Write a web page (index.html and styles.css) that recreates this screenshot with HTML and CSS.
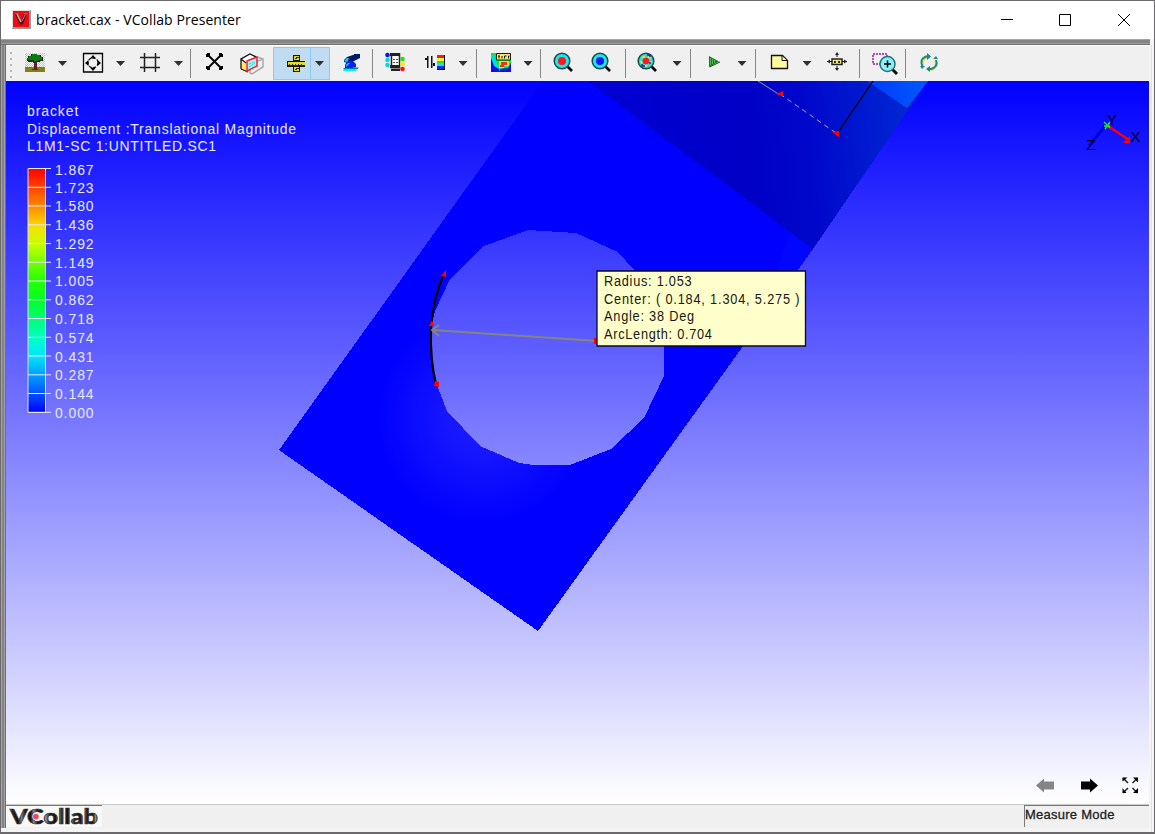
FILE: index.html
```html
<!DOCTYPE html>
<html lang="en">
<head>
<meta charset="utf-8">
<title>bracket.cax - VCollab Presenter</title>
<link rel="stylesheet" href="styles.css">
</head>
<body>
<div class="window">
  <header class="titlebar">
    <svg class="app-icon" width="19" height="19" viewBox="0 0 19 19"><path fill="#999" d="M0 0h19v19H0z"/><path fill="#ddd" d="M0 0h18v1H1v17H0z"/><path fill="#f00b12" d="M1 1h16v16H1z"/><path d="M4.500 4l4 9h1.500l3.500-10" fill="none" stroke="#601015" stroke-width="2.800"/><path d="M5 4l4 8" stroke="#bbb" stroke-width="1.500"/><path d="M10 11l4-8" stroke="#a88" /><path d="M3 3.500h4M11.500 3.500h4" stroke="#777"/></svg>
    <h1 class="title">bracket.cax - VCollab Presenter</h1>
    <svg class="caption" width="132" height="20" viewBox="1000 10 132 20" fill="none" stroke="#000" stroke-width="1"><path d="M1001 19.5h12M1059.500 14.500h11v11h-11zM1118 14l12 12M1130 14l-12 12"/></svg>
  </header>
  <div class="frame">
    <nav class="toolbar">
      <span class="grip"></span>
      <svg class="icon" viewBox="0 0 20 20"><defs><pattern id="sky" width="2" height="2" patternUnits="userSpaceOnUse"><path fill="#fff" d="M0 0h2v2H0z"/><path fill="#43f2f7" d="M0 0h1v1H0zM1 1h1v1H1z"/></pattern></defs><path fill="url(#sky)" d="M0-1h20v16H0z"/><path fill="#808018" d="M0 13h20v5H0z"/><path fill="#0a340b" d="M6 0h6v1h4v2h2v4h-3v1h-4v1H8V8H3V7H2V4h1V2h3z"/><path fill="#087d15" d="M7 0h5v1h3v2h2v3h-4v1H9V6H3V4h1V2h3z"/><path fill="#651b22" d="M9 7h3v8h1v1H7v-1h2z"/></svg>
      <span class="caret"></span>
      <svg class="icon" viewBox="0 0 20 20"><path d="M.5-.500h19v18.500H.5z" fill="none" stroke="#000" stroke-width="1.300"/><circle cx="10" cy="8.800" r="5" fill="none" stroke="#222" stroke-width="1.300" stroke-dasharray="3 1.500"/><path d="M10 1l3 3.500H7zM10 17l3-3.500H7zM2 9l3.500-3v6zM18 9l-3.500-3v6z"/></svg>
      <span class="caret"></span>
      <svg class="icon" viewBox="0 0 20 20"><path d="M4.500-1v19M15.500-1v19M0 3.500h20M0 13.500h20" stroke="#222" stroke-width="1.500"/></svg>
      <span class="caret"></span>
      <span class="sep"></span>
      <svg class="icon" viewBox="0 0 20 20"><path d="M3 1l13 13M16 1L3 14" stroke="#000" stroke-width="1.800"/><path d="M2-1h3v3H4v1H1V0h1zM14-1h3v1h1v3h-3V2h-1zM1 12h3v1h1v3H2v-1H1zM15 12h3v3h-1v1h-3v-3h1z"/></svg>
      <svg class="icon wide" viewBox="0 0 24 22"><path d="M1 6l9-5 5 3-9 4-1 11-4-2z" fill="#fff"/><path d="M1 8l5 3v8l-5-3z" fill="#ffe867"/><path d="M10 19V11l13-5v8l-11 7-2-1zM14 3l9 3" fill="none" stroke="#aaa" stroke-width="1.500"/><path d="M1 16V6l9-5 6 3M1 6l5 4M1 16l7 3" fill="none" stroke="#111" stroke-width="1.300"/><path d="M7 8l10-4v9L7 18z" fill="#9df4fa" stroke="#f32228" stroke-width="1.500"/><path d="M9 11l6-2M9 14l6-4" stroke="#39cbd0" stroke-dasharray="2 1"/></svg>
      <span class="active-tool">
        <svg class="icon" viewBox="0 0 20 20"><path fill="#171707" d="M7 1h7v17H7zM1 7h18v6H1z"/><path fill="#e6dd1d" d="M8 2h5v4H8zM2 8h17v3H2zM8 13h5v4H8z"/><path d="M3.500 10v2M6.500 10v2M9.500 10v2M12.500 10v2M15.500 10v2M9 4.500h2M10 3.500h3M9 15.500h2M10 14.500h3" stroke="#28270a"/></svg>
        <span class="active-arrow"><i class="caret"></i></span>
      </span>
      <svg class="icon" viewBox="0 0 20 20"><path fill="#0aeaf0" d="M4 13h14l-3 4H2z"/><path fill="#087da0" d="M3 14h14v1H2z"/><path fill="#001a68" d="M3 6l3-3 9-3h4v4l-6 3-6 2-4-1z"/><path fill="#0722f4" d="M6 7h6l3 3v3l-4 1H4v-3z"/><path fill="#14d8ed" d="M3 7l3-3h2L6 8zM5 11l2-2h2l-4 4z"/><path fill="#001a68" d="M13 0h6v4h-2V2h-4z"/></svg>
      <span class="sep"></span>
      <svg class="icon" viewBox="0 0 20 20"><path fill="#fff" stroke="#222" stroke-width="1.500" d="M6.500-.3h8v14h-8z"/><path fill="#222" d="M5-1h10v3H5zM5 11h10v3H5zM6 15h9v2H6z"/><path d="M8 5h2v1H8zM11 5h2v1h-2zM8 8h2v1H8zM11 8h2v1h-2z" fill="#555"/><circle cx="2.500" cy="1" r="2.300" fill="#0710ff"/><circle cx="2.500" cy="6" r="2.300" fill="#00d9eb"/><circle cx="2.500" cy="11" r="2.300" fill="#00d9eb"/><circle cx="17.500" cy="5" r="2.300" fill="#20df10"/><circle cx="17.500" cy="10" r="2.300" fill="#ffe908"/><circle cx="17.500" cy="15" r="2.300" fill="#fb1016"/></svg>
      <svg class="icon" viewBox="0 0 20 20"><path fill="#111" d="M2 2h1.500v12H2zM0 4h2v2H0zM6 2h1.500v12H6zM8 12h2v-3H8z"/><path d="M12 1h8v15h-8z" fill="#111"/><path d="M12 1h7v3h-7z" fill="#f8171b"/><path d="M12 4h7v3h-7z" fill="#fff324"/><path d="M12 7h7v2h-7z" fill="#15e92a"/><path d="M12 9h7v3h-7z" fill="#20dce5"/><path d="M12 12h7v3h-7z" fill="#1028f5"/></svg>
      <span class="caret"></span>
      <span class="sep"></span>
      <svg class="icon" viewBox="0 0 20 20"><path fill="#0ce54f" d="M0-1h20v19H0z"/><path fill="#00dde8" d="M0 1h3l4 12 4-2v7H0z"/><path fill="#0815df" d="M0 4l3 8 5 3v3H0zM9 15l8-1 3-5v9H8z"/><path fill="#eee31f" d="M8 7h10v5h-5v2H8z"/><path fill="#ed321d" d="M10 8h6v3h-3v2h-4v-2h1z"/><path d="M5.500-.500h14v6.500h-14z" fill="#f0e878" stroke="#222008"/><path d="M7 2h2M8 2v2.500M11 2v2.500M13.500 2v2.500M13.500 2h2M17.500 2v2.500M17.500 2h1" stroke="#111"/></svg>
      <span class="caret"></span>
      <span class="sep"></span>
      <svg class="icon" viewBox="0 0 20 20"><path d="M13 11l6 6" stroke="#000" stroke-width="2.700"/><circle cx="9" cy="7" r="7.800" fill="#20e6ea" stroke="#134d50" stroke-width="1.500"/><circle cx="9" cy="7" r="4" fill="#ff171b"/></svg>
      <svg class="icon" viewBox="0 0 20 20"><path d="M13 11l6 6" stroke="#000" stroke-width="2.700"/><circle cx="9" cy="7" r="7.800" fill="#20e6ea" stroke="#134d50" stroke-width="1.500"/><circle cx="9" cy="7" r="4" fill="#0e19fb"/></svg>
      <span class="sep"></span>
      <svg class="icon" viewBox="0 0 20 20"><path d="M13 11l6 6" stroke="#000" stroke-width="2.700"/><circle cx="9" cy="7" r="7.800" fill="#30dbe0" stroke="#174d50" stroke-width="1.500"/><circle cx="9" cy="7" r="4.800" fill="none" stroke="#dce638" stroke-width="2" stroke-dasharray="3 3"/><path d="M10 1h3v2M5 10v2h3M12 9h2" fill="none" stroke="#1c2298" stroke-width="1.500"/><circle cx="9" cy="7" r="3.300" fill="#ff171b"/></svg>
      <span class="caret"></span>
      <span class="sep"></span>
      <svg class="icon" viewBox="0 0 20 20"><path fill="#117b20" d="M5 2l10 5.500L5 13z"/><path stroke="#53b957" d="M6.500 4v7M8.500 5v5M10.500 6v3"/><path fill="none" stroke="#174c1b" d="M5.500 13L16 8"/></svg>
      <span class="caret"></span>
      <span class="sep"></span>
      <svg class="icon" viewBox="0 0 20 20"><path d="M2.500 1.500h11l5 5v8h-16z" fill="#fffa9b" stroke="#111" stroke-width="1.300"/><path d="M13 1.500v5h5.500z" fill="#fff" stroke="#111"/></svg>
      <span class="caret"></span>
      <svg class="icon" viewBox="0 0 20 20"><path d="M0 7.500h20M10-1v4M10 12v4" stroke="#111"/><path d="M0 7.500l3-2v4zM20 7.500l-3-2v4zM10-2l2 3H8zM10 17l2-3H8z" fill="#222"/><path d="M5 5h10v5.500H5z" fill="#f8ed76" stroke="#222" stroke-width="1.500"/><path d="M7 7h2v2H7zM11 7h2v2h-2z" fill="#28250d"/></svg>
      <span class="sep"></span>
      <svg class="icon wide" viewBox="0 0 24 22"><path d="M1 1h14v10H1z" fill="none" stroke="#941b9a" stroke-width="1.500" stroke-dasharray="2 1"/><path d="M20 16l5 5" stroke="#111" stroke-width="3"/><circle cx="15.500" cy="11" r="7.500" fill="#8af2f7" stroke="#247078" stroke-width="1.500"/><path d="M12 11h7M15.500 7.500v7" stroke="#000" stroke-width="1.500"/></svg>
      <span class="sep"></span>
      <svg class="icon" viewBox="0 0 20 20"><path d="M4 13C2 8 4 5 8 3h3M16 6c2 4 1 7-2 9l-4 1" fill="none" stroke="#f0df42" stroke-width="2.600"/><path d="M3.500 12C1 7 3 4 7 2.500h4M17 6c2 5-1 8-5 9H9" fill="none" stroke="#128a8f" stroke-width="1.900"/><path fill="#128a8f" d="M8-1l4 3.500L8 6zM11 12v6l-4-3zM14 5h5l-2-3zM1 12h5l-3 3z"/></svg>
    </nav>
    <main class="view">
      <svg class="scene" width="1143" height="723" viewBox="6 81 1143 723">
        <defs>
          <linearGradient id="dark" gradientUnits="userSpaceOnUse" x1="590" y1="110" x2="900" y2="80"><stop offset="0" stop-color="#0000d4"/><stop offset=".5" stop-color="#0000c6"/><stop offset=".7" stop-color="#0008cc"/><stop offset="1" stop-color="#0026d2"/></linearGradient>
          <linearGradient id="bright"><stop offset="0" stop-color="#003cf8"/><stop offset="1" stop-color="#0058ff"/></linearGradient>
          <linearGradient id="scale" x1="0" x2="0" y1="0" y2="1"><stop offset="0" stop-color="#f00"/><stop offset=".15" stop-color="#ff8400"/><stop offset=".24" stop-color="#f8e000"/><stop offset=".31" stop-color="#c6ff00"/><stop offset=".45" stop-color="#2dff00"/><stop offset=".54" stop-color="#00ff27"/><stop offset=".7" stop-color="#00ffc8"/><stop offset=".77" stop-color="#00e5fb"/><stop offset=".87" stop-color="#0088ff"/><stop offset="1" stop-color="#0000ff"/></linearGradient>
          <radialGradient id="glow" gradientUnits="userSpaceOnUse" cx="482" cy="418" r="105"><stop offset="0" stop-color="#2020ff"/><stop offset=".45" stop-color="#1212ff"/><stop offset="1" stop-color="#0000ff"/></radialGradient>
        </defs>
        <g shape-rendering="crispEdges">
          <path fill="url(#glow)" fill-rule="evenodd" d="M543 81H928L813 249 538 631 279 450zM528 230L576 233 618 252 635 271 654 305 664 345V376L644 418 611 449 570 465H533L519 463 480 446 447 411 437 385 431 355V328L435 311 450 279 484 246z"/>
          <path fill="url(#dark)" d="M588 81H928L813 249z"/>
          <path fill="url(#bright)" d="M867 81H928L907 108z"/>
          <path fill="#0018ff" opacity=".25" d="M790 232l23 17-30 41h-12z"/>
        </g>
        <path d="M758 81l22 14" stroke="#999"/><path d="M780 94l56 39" stroke="#aaa" stroke-dasharray="5 4"/><path d="M873 81l-36 53" stroke="#000" stroke-width="1.300"/>
        <path fill="#f00" d="M776 94l7-3v5zM832 132l7-1v6z"/>
        <path d="M444 274Q433 297 431 329Q430 360 436 384" fill="none" stroke="#000" stroke-width="2.200"/>
        <path d="M433 330L597 341M439 325l-7 5 7 6" fill="none" stroke="#85857e" stroke-width="2"/>
        <path fill="#f00" d="M441 276l5-6v7zM429 326l3-6 2 6zM434 386l1-5 4 1v5zM594 338h3v6h-3z"/>
        <g class="legend" transform="translate(27 0) scale(.9 1)">
          <text x="0" y="116" textLength="57">bracket</text><text x="0" y="134" textLength="299">Displacement :Translational Magnitude</text><text x="0" y="151" textLength="210">L1M1-SC 1:UNTITLED.SC1</text>
          <text x="31" y="175" textLength="43">1.867</text><text x="31" y="193" textLength="43">1.723</text><text x="31" y="211" textLength="43">1.580</text><text x="31" y="230" textLength="43">1.436</text><text x="31" y="249" textLength="43">1.292</text><text x="31" y="268" textLength="43">1.149</text><text x="31" y="286" textLength="43">1.005</text><text x="31" y="305" textLength="43">0.862</text><text x="31" y="324" textLength="43">0.718</text><text x="31" y="343" textLength="43">0.574</text><text x="31" y="362" textLength="43">0.431</text><text x="31" y="380" textLength="43">0.287</text><text x="31" y="399" textLength="43">0.144</text><text x="31" y="418" textLength="43">0.000</text>
        </g>
        <path fill="url(#scale)" stroke="#ddddff" d="M28 168.500h17.500v244H28z"/>
        <path stroke="#e9e9ff" d="M28 168.500h23M28 187.300h23M28 206h23M28 224.800h23M28 243.600h23M28 262.300h23M28 281h23M28 299.800h23M28 318.500h23M28 337.300h23M28 356h23M28 374.800h23M28 393.500h23M28 412.300h23"/>
        <path d="M1106 125l-17 21" stroke="#0000e0" stroke-width="3"/><path d="M1108 126l21 14" stroke="#f00" stroke-width="2.500"/><path d="M1130 136v7h-7z" fill="#f00"/><path d="M1104 122l6 6M1110 122l-5 7M1104 126h6" stroke="#24e719" stroke-width="1.400"/>
        <g class="axes"><text x="1107" y="125">Y</text><text x="1130.500" y="142">X</text><text x="1086.500" y="150">Z</text></g>
        <path fill="#ffffcb" stroke="#080820" stroke-width="1.300" d="M597 271h208.500v75H597z"/>
        <g class="measure" transform="translate(604 0) scale(.85 1)"><text x="0" y="286.500" textLength="103">Radius: 1.053</text><text x="0" y="304" textLength="230">Center: ( 0.184, 1.304, 5.275 )</text><text x="0" y="321.500" textLength="106">Angle: 38 Deg</text><text x="0" y="339" textLength="127">ArcLength: 0.704</text></g>
        <path fill="#858585" d="M1036 785.500l8-7v3h10v8h-10v3z"/><path fill="#000" d="M1098 785.500l-8-7v3h-9v8h9v3z"/>
        <path d="M1123 778l5 5M1137.500 778l-5 5M1123 793l5-5M1137.500 793l-5-5" stroke="#222" stroke-width="1.500"/><path d="M1122.500 777.500h5l-5 4zM1138 777.500v5l-5-5zM1122.500 793v-5l4 5zM1138 793h-5l5-5z"/>
      </svg>
    </main>
    <footer class="statusbar">
      <svg class="logo" width="96" height="22" viewBox="0 0 96 22"><defs><linearGradient id="metal" gradientUnits="userSpaceOnUse" x1="0" x2="13" spreadMethod="repeat"><stop stop-color="#999"/><stop offset=".35" stop-color="#222"/><stop offset=".8" stop-color="#111"/><stop offset="1" stop-color="#666"/></linearGradient></defs><text x="2" y="18.500" textLength="92" lengthAdjust="spacingAndGlyphs">VCollab</text><circle cx="29" cy="11" r="3" fill="#fa4450"/></svg>
      <span class="mode">Measure Mode</span>
    </footer>
  </div>
</div>
</body>
</html>
```

FILE: styles.css
```css
* { box-sizing: border-box; }
body { margin: 0; overflow: hidden; font-family: "Liberation Sans", sans-serif; }
.window { width: 1155px; height: 834px; display: flex; flex-direction: column; border: 1px solid #6b696b; border-bottom-width: 2px; background: #fff; }
.titlebar { height: 38px; flex: none; display: flex; align-items: center; padding: 0 22px 0 11px; }
.app-icon { margin-bottom: 2px; }
.title { flex: 1; margin: 0 0 2px 5px; font: 400 14px "Open Sans", sans-serif; letter-spacing: .07px; color: #000; }
.frame { flex: 1; min-height: 0; display: flex; flex-direction: column; padding: 6px 5px 4px;
  background:
    linear-gradient(#a5a5a5 0 1px, #848484 1px 4px, #9c9c9c 4px 5px, #707070 5px) 0 0 / 1149px 6px no-repeat,
    linear-gradient(to right, #a5a5a5 0 1px, #848484 1px 3px, #a0a0a0 3px 4px, #707070 4px) 0 0 / 5px 789px no-repeat,
    linear-gradient(#e3e3e3, #e3e3e3) 1150px 6px / 1px 100% no-repeat,
    #f4f4f4; }
.toolbar { height: 36px; flex: none; display: grid; align-items: center; justify-items: center; background: #f0f0f0; border-top: 1px solid #fff;
  grid-template-columns: 10px 38px 17px 44px 11px 48px 9px 15px 33px 41px 58px 41px 3px 42px 38px 18px 8px 42px 12px 12px 33px 44px 4px 39px 22px 4px 44px 12px 14px 34px 22px 37px 8px 41px 2px 46px; }
.grip { width: 4px; height: 28px; background: radial-gradient(circle, #b8b8b8 1px, transparent 1.5px) 0 0 / 4px 6px; }
.icon { width: 20px; height: 20px; overflow: visible; }
.icon.wide { width: 24px; height: 22px; }
.caret { width: 9px; height: 5px; background: #303030; clip-path: polygon(0 0, 100% 0, 50% 100%); }
.sep { width: 1px; height: 29px; background: #858585; }
.active-tool { display: flex; align-items: center; justify-content: space-between; width: 57px; height: 33px; padding-left: 12px; background: #c0dcf3; border: 1px solid #90c8f6; }
.active-arrow { width: 19px; height: 31px; display: flex; align-items: center; justify-content: center; border-left: 1px solid #90c8f6; }
.view { height: 723px; flex: none; background: linear-gradient(#00f, #fff); }
.scene { display: block; }
.legend { font: 15.5px "Liberation Sans", sans-serif; fill: #e8e8ff; }
.measure { font: 15px "Liberation Sans", sans-serif; fill: #181810; }
.axes { font: 15px "Liberation Sans", sans-serif; fill: #000018; }
.statusbar { flex: 1; min-height: 0; display: flex; justify-content: space-between; background: #f0f0f0; border-top: 1px solid #cacaca; }
.logo { background: #f8f8f8; border-top: 1px solid #777; overflow: visible; }
.logo text { font: 900 21px "Lato", sans-serif; fill: url(#metal); stroke: #333; stroke-width: .7px; }
.mode { width: 125px; height: 22px; border-left: 1px solid #777; border-top: 1px solid #777; padding: 0; font-size: 13px; line-height: 17px; letter-spacing: .25px; color: #222; -webkit-text-stroke: .3px #222; }
```
